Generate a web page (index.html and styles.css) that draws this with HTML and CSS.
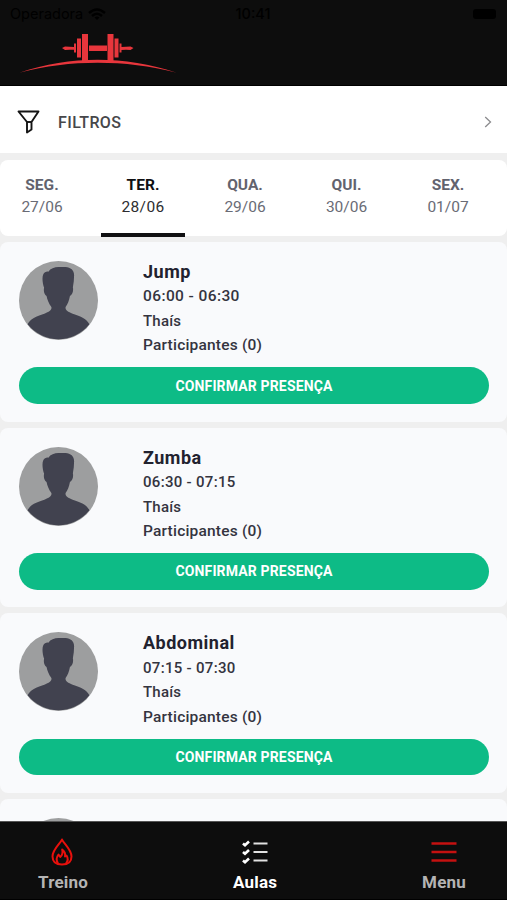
FILE: index.html
```html
<!DOCTYPE html>
<html lang="pt-BR">
<head>
<meta charset="utf-8">
<title>Aulas</title>
<link rel="stylesheet" href="styles.css">
</head>
<body>
<svg class="defs" width="0" height="0">
  <symbol id="avatar" viewBox="0 0 78 78">
    <circle cx="39" cy="39" r="39" fill="#9d9e9f"/>
    <path fill="#41424f" d="M8.500 62.500C11 57 17 54.500 25 52C30 50.200 32.500 48.500 32 45.500C29.500 42 27.800 38 27.200 34.500C25 33.500 24 29.500 24.800 26.500C23.300 22 22.500 16 24 13C25 11 27 10.200 29 10.500C31 7.500 35 6 39 6H46C51 6.200 54.500 9.500 54.400 14C54.400 18 54 22 53.200 26C54 30 52.500 33.500 50.300 34.500C49.500 39 48 42.500 46 45.500C45.500 48.500 48 50.200 53 52C61 54.500 67 57 69.500 62.500A39 39 0 0 1 8.500 62.500Z"/>
  </symbol>
</svg>
<div class="app">
  <header class="header">
    <div class="status">
      <div class="carrier"><span>Operadora</span>
        <svg width="18" height="13" viewBox="0 0 18 13" fill="none" stroke="#000" stroke-width="2.400"><path d="M1 5Q9-2 17 5M4 8Q9 3.500 14 8"/><path d="M6.500 9.500Q9 7.500 11.500 9.500L9 12Z" fill="#000" stroke="none"/></svg>
      </div>
      <span class="time">10:41</span>
      <span class="battery"></span>
    </div>
    <svg class="logo" width="156" height="42" viewBox="0 0 156 42" fill="#e8363c">
      <path d="M0 40.500C50 23.500 105 23.500 156 40.500C105 27.500 50 27.500 0 40.500Z"/>
      <path d="M62 2h6v27h-6zM87.500 2h6v27h-6zM57 6.500h4v19h-4zM94.500 6.500h4v19h-4zM54 11.500h2v9h-2zM99.500 11.500h2v9h-2zM69 13.500h18v5.500H69zM42 16l3-1.500 9 .5v2.500l-9 .5zM113.500 16l-3-1.500-9 .5v2.500l9 .5z"/>
    </svg>
  </header>
  <div class="filters">
    <svg width="24" height="26" viewBox="0 0 24 26" fill="none" stroke="#151515" stroke-width="1.900" stroke-linejoin="round"><path d="M1.500 2.500H21.500L14.500 13V20.500L10 23.500V13Z"/><path d="M10 13H14.500"/></svg>
    <span class="filters-label">FILTROS</span>
    <svg class="chevron" width="8" height="12" viewBox="0 0 8 12" fill="none" stroke="#8b8b8e" stroke-width="1.300"><path d="M1.200 1L6.500 6L1.200 11"/></svg>
  </div>
  <nav class="days">
    <div class="day"><b>SEG.</b><span>27/06</span></div>
    <div class="day active"><b>TER.</b><span>28/06</span></div>
    <div class="day"><b>QUA.</b><span>29/06</span></div>
    <div class="day"><b>QUI.</b><span>30/06</span></div>
    <div class="day"><b>SEX.</b><span>01/07</span></div>
  </nav>
  <main class="list">
    <article class="card">
      <div class="info"><svg class="avatar"><use href="#avatar"/></svg>
        <div class="text"><h2>Jump</h2><p class="hours wide">06:00 - 06:30</p><p>Thaís</p><p class="people">Participantes (0)</p></div></div>
      <button>CONFIRMAR PRESENÇA</button>
    </article>
    <article class="card">
      <div class="info"><svg class="avatar"><use href="#avatar"/></svg>
        <div class="text"><h2>Zumba</h2><p class="hours">06:30 - 07:15</p><p>Thaís</p><p class="people">Participantes (0)</p></div></div>
      <button>CONFIRMAR PRESENÇA</button>
    </article>
    <article class="card">
      <div class="info"><svg class="avatar"><use href="#avatar"/></svg>
        <div class="text"><h2>Abdominal</h2><p class="hours">07:15 - 07:30</p><p>Thaís</p><p class="people">Participantes (0)</p></div></div>
      <button>CONFIRMAR PRESENÇA</button>
    </article>
    <article class="card">
      <div class="info"><svg class="avatar"><use href="#avatar"/></svg></div>
    </article>
  </main>
  <footer class="tabs">
    <div class="tab">
      <svg width="24" height="28" viewBox="0 0 24 28" fill="none" stroke="#e8100c" stroke-width="2" stroke-linejoin="round"><path d="M11 1.500C12.500 5.500 20.500 11.500 20.500 18.500C20.500 23.500 17 26.500 11 26.500S1.500 23.500 1.500 18.500C1.500 11.500 9.500 5.500 11 1.500Z"/><path d="M7 25.500C4.800 22 5.500 19 7.500 16.500L9.200 19C11.500 17 12 14.500 11.200 11.500C14 13.500 14.500 16 14 18.500L15.500 17.500C17.500 20.500 17 23 15 25.500"/></svg>
      <span>Treino</span>
    </div>
    <div class="tab current">
      <svg width="28" height="28" viewBox="0 0 28 28" fill="none" stroke="#fff" stroke-width="2.600"><path d="M2 5.500L4 7.300L8 3.500M2 14L4 15.800L8 12M2 22.500L4 24.300L8 20.500"/><path d="M12.500 5.500H26.500M12.500 14H26.500M12.500 22.500H26.500" stroke="#e2e2e2" stroke-width="2.200"/></svg>
      <span>Aulas</span>
    </div>
    <div class="tab">
      <svg width="26" height="28" viewBox="0 0 26 28" stroke="#c41110" stroke-width="2.500"><path d="M.5 5.500H25.500M.5 14H25.500M.5 22.500H25.500"/></svg>
      <span>Menu</span>
    </div>
  </footer>
</div>
</body>
</html>
```

FILE: styles.css
```css
* { box-sizing: border-box; }
body { margin: 0; font-family: Roboto, "Liberation Sans", sans-serif; background: #efefef; }
.defs { display: block; }
.app { width: 507px; height: 900px; display: flex; flex-direction: column; overflow: hidden; }
.header { height: 86px; flex: none; background: #0d0d0d; border-bottom: 1px solid #000; }
.status { height: 28px; display: grid; grid-template-columns: 1fr auto 1fr; align-items: center; padding: 0 11px 0 10px; color: #000; font: 14.500px/28px Inter, sans-serif; }
.carrier { display: flex; align-items: center; gap: 5px; }
.time { font-weight: 500; }
.battery { justify-self: end; width: 23px; height: 10px; border-radius: 3px; background: #000; }
.logo { display: block; margin: 4px 0 0 20px; }
.filters { height: 67px; flex: none; display: flex; align-items: center; padding: 5px 15px 0 17px; background: #fff; }
.filters-label { margin-left: 17px; font-size: 16px; font-weight: 500; color: #47474a; letter-spacing: .4px; }
.chevron { margin-left: auto; }
.days { height: 76px; flex: none; display: grid; grid-template-columns: repeat(5, 84px); column-gap: 17.500px; margin: 7px 0 0; background: #fff; border-radius: 8px; }
.day { display: flex; flex-direction: column; align-items: center; padding-top: 14px; color: #696b75; font-size: 15.500px; line-height: 22px; border-bottom: 4px solid transparent; }
.day b { font-weight: 700; color: #62636e; }
.day.active { color: #2d2d30; border-color: #101012; height: 77px; letter-spacing: .4px; margin: 0 .5px 0 -.5px; }
.day.active b { color: #101012; letter-spacing: .1px; }
.list { flex: 1; min-height: 0; overflow: hidden; display: flex; flex-direction: column; gap: 6px; padding-top: 6px; }
.card { flex: none; height: 179.700px; padding: 19px 18px 0 19px; border-radius: 8px; background: #f9fafc; }
.info { height: 106.400px; display: flex; }
.avatar { width: 79px; height: 79px; flex: none; }
.text { margin-left: 45px; color: #34343f; }
h2 { margin: 0; font-size: 18px; line-height: 21px; font-weight: 700; color: #22222f; letter-spacing: .5px; }
p { margin: 0; font-size: 15px; line-height: 24.500px; font-weight: 500; letter-spacing: .2px; }
.hours { margin-top: 2.400px; letter-spacing: .3px; }
.hours.wide { font-size: 15.500px; letter-spacing: .4px; }
.people { font-size: 15.500px; letter-spacing: .2px; }
button { display: block; width: 100%; height: 36.500px; border: 0; border-radius: 19px; background: #0dbb86; color: #fff; font: 700 14px Roboto, sans-serif; letter-spacing: .15px; padding: 0; }
.tabs { height: 79px; flex: none; display: flex; justify-content: space-between; padding: 16px 41px 0 38px; background: #0d0d0d; border-top: 1px solid #555; border-bottom: 1px solid #000; }
.tab { display: flex; flex-direction: column; align-items: center; gap: 5px; color: #b4b4b4; font-size: 17px; line-height: 22px; font-weight: 700; letter-spacing: .2px; }
.current { color: #fff; }
```
